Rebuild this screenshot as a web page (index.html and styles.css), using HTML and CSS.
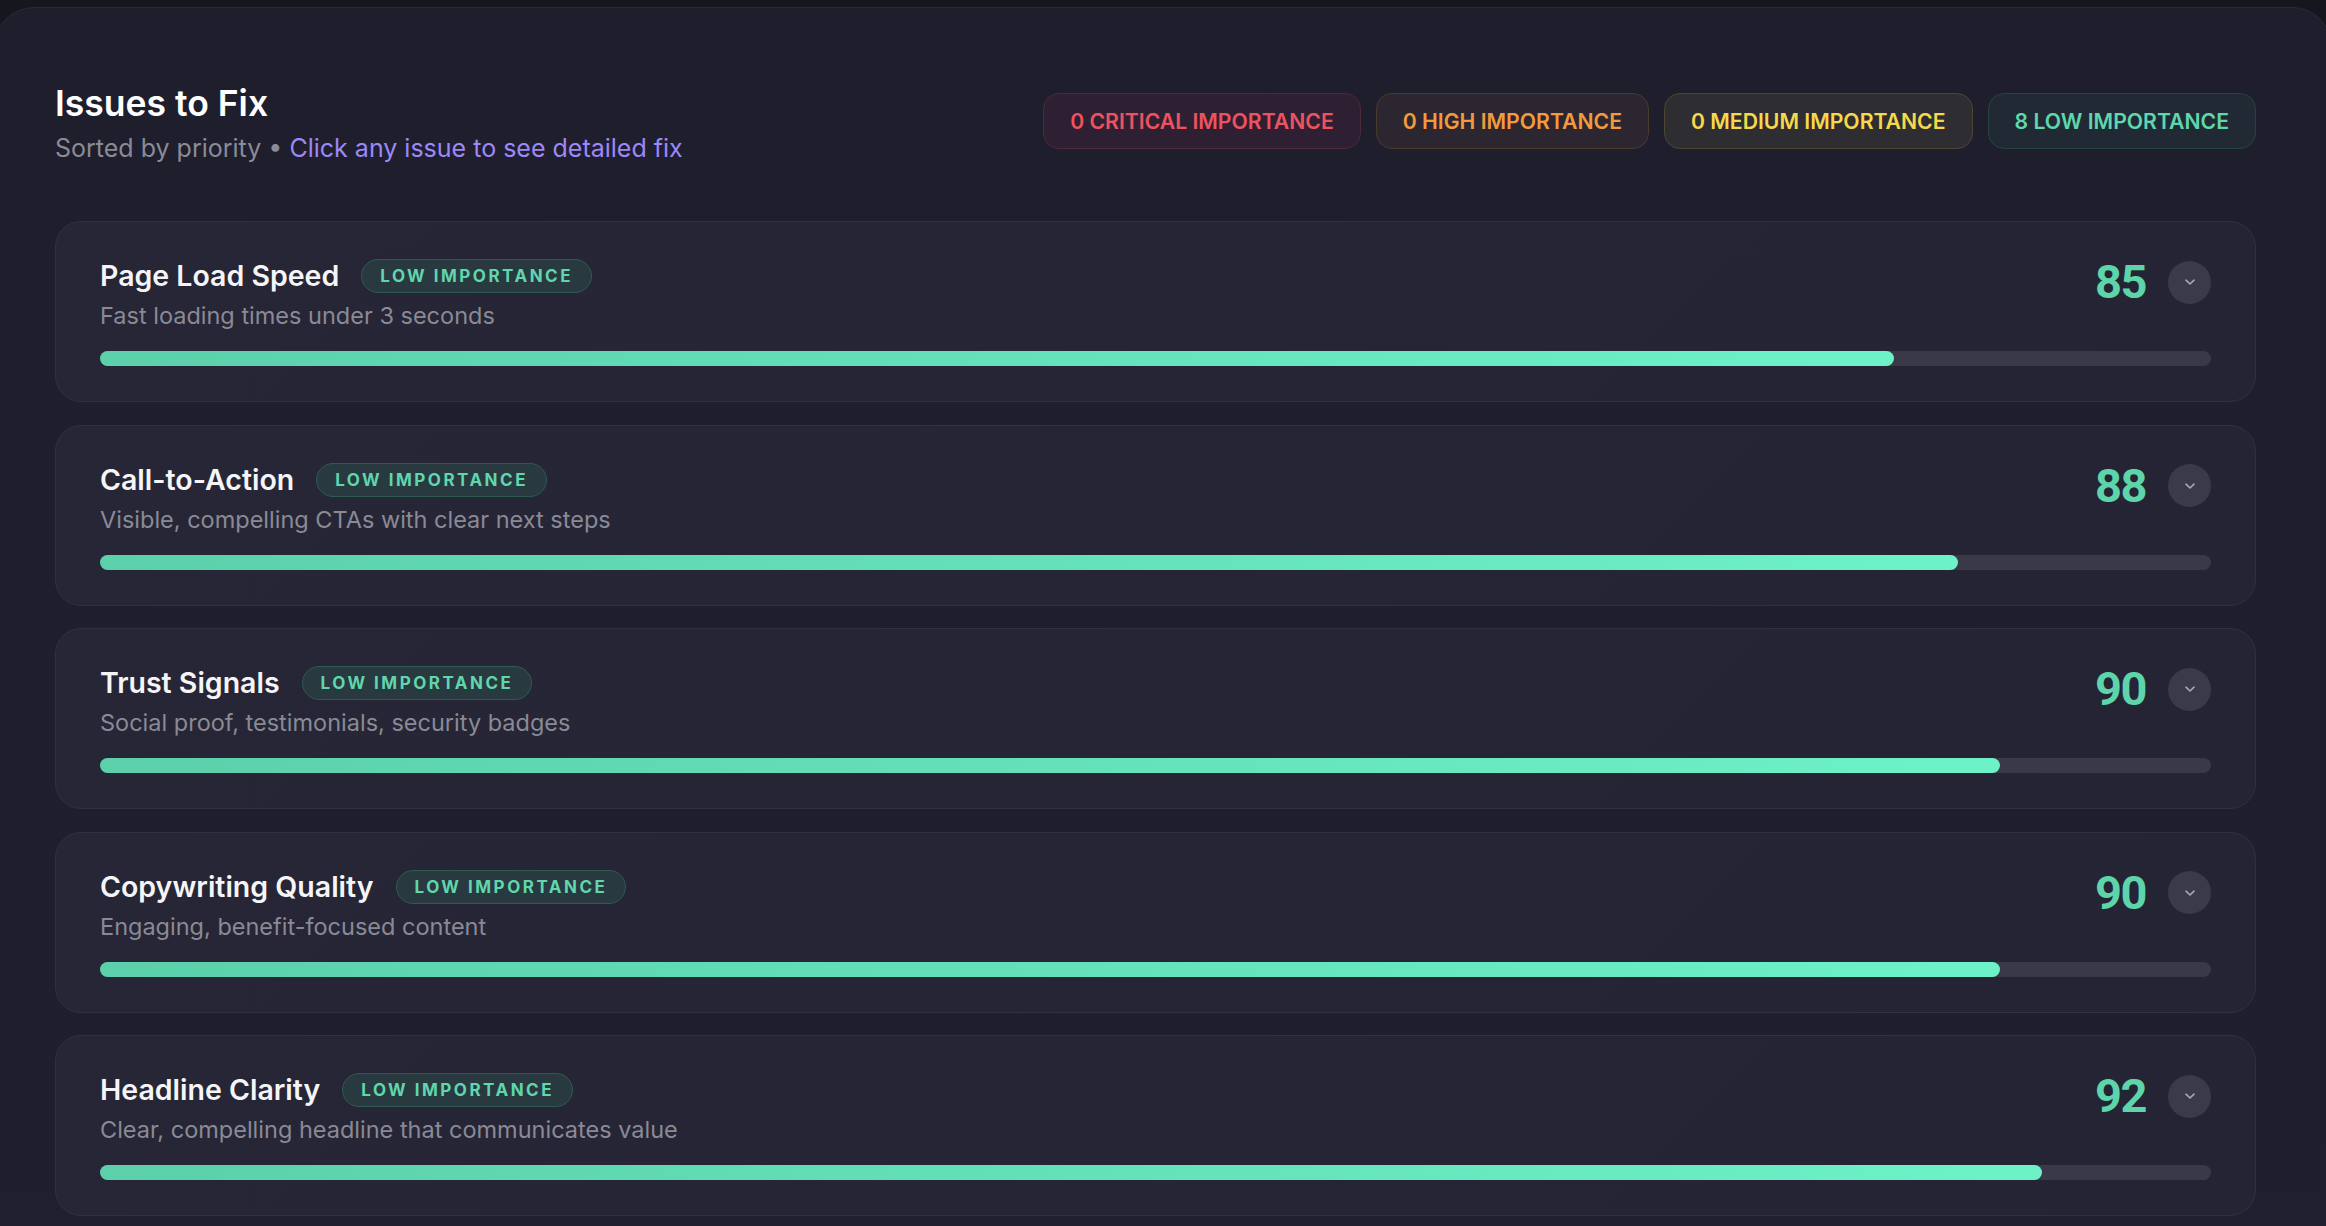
FILE: index.html
```html
<html>
  <head>
    <title>Issues to Fix</title>
    <link rel="stylesheet" href="styles.css">
  </head>
  <body>
    <div class="panel">
      <div class="panel-head">
        <div class="head-text">
          <h1>Issues to Fix</h1>
          <p class="subtitle">Sorted by priority &bull; <span class="hint">Click any issue to see detailed fix</span></p>
        </div>
        <div class="counts">
          <span class="count critical">0 CRITICAL IMPORTANCE</span>
          <span class="count high">0 HIGH IMPORTANCE</span>
          <span class="count medium">0 MEDIUM IMPORTANCE</span>
          <span class="count low">8 LOW IMPORTANCE</span>
        </div>
      </div>

      <div class="issue-list">
        <div class="issue">
          <div class="issue-top">
            <div class="issue-info">
              <div class="issue-title">
                <h3>Page Load Speed</h3>
                <span class="tag">LOW IMPORTANCE</span>
              </div>
              <p class="issue-desc">Fast loading times under 3 seconds</p>
            </div>
            <div class="issue-score">
              <span class="score">85</span>
              <span class="toggle"><svg width="16" height="16" viewBox="0 0 16 16"><path d="M4 6.2l4 3.8 4-3.8" fill="none" stroke="#a9a9b8" stroke-width="1.6" stroke-linecap="round" stroke-linejoin="round"/></svg></span>
            </div>
          </div>
          <div class="bar"><div class="bar-fill" style="width: 85%"></div></div>
        </div>

        <div class="issue">
          <div class="issue-top">
            <div class="issue-info">
              <div class="issue-title">
                <h3>Call-to-Action</h3>
                <span class="tag">LOW IMPORTANCE</span>
              </div>
              <p class="issue-desc">Visible, compelling CTAs with clear next steps</p>
            </div>
            <div class="issue-score">
              <span class="score">88</span>
              <span class="toggle"><svg width="16" height="16" viewBox="0 0 16 16"><path d="M4 6.2l4 3.8 4-3.8" fill="none" stroke="#a9a9b8" stroke-width="1.6" stroke-linecap="round" stroke-linejoin="round"/></svg></span>
            </div>
          </div>
          <div class="bar"><div class="bar-fill" style="width: 88%"></div></div>
        </div>

        <div class="issue">
          <div class="issue-top">
            <div class="issue-info">
              <div class="issue-title">
                <h3>Trust Signals</h3>
                <span class="tag">LOW IMPORTANCE</span>
              </div>
              <p class="issue-desc">Social proof, testimonials, security badges</p>
            </div>
            <div class="issue-score">
              <span class="score">90</span>
              <span class="toggle"><svg width="16" height="16" viewBox="0 0 16 16"><path d="M4 6.2l4 3.8 4-3.8" fill="none" stroke="#a9a9b8" stroke-width="1.6" stroke-linecap="round" stroke-linejoin="round"/></svg></span>
            </div>
          </div>
          <div class="bar"><div class="bar-fill" style="width: 90%"></div></div>
        </div>

        <div class="issue">
          <div class="issue-top">
            <div class="issue-info">
              <div class="issue-title">
                <h3>Copywriting Quality</h3>
                <span class="tag">LOW IMPORTANCE</span>
              </div>
              <p class="issue-desc">Engaging, benefit-focused content</p>
            </div>
            <div class="issue-score">
              <span class="score">90</span>
              <span class="toggle"><svg width="16" height="16" viewBox="0 0 16 16"><path d="M4 6.2l4 3.8 4-3.8" fill="none" stroke="#a9a9b8" stroke-width="1.6" stroke-linecap="round" stroke-linejoin="round"/></svg></span>
            </div>
          </div>
          <div class="bar"><div class="bar-fill" style="width: 90%"></div></div>
        </div>

        <div class="issue">
          <div class="issue-top">
            <div class="issue-info">
              <div class="issue-title">
                <h3>Headline Clarity</h3>
                <span class="tag">LOW IMPORTANCE</span>
              </div>
              <p class="issue-desc">Clear, compelling headline that communicates value</p>
            </div>
            <div class="issue-score">
              <span class="score">92</span>
              <span class="toggle"><svg width="16" height="16" viewBox="0 0 16 16"><path d="M4 6.2l4 3.8 4-3.8" fill="none" stroke="#a9a9b8" stroke-width="1.6" stroke-linecap="round" stroke-linejoin="round"/></svg></span>
            </div>
          </div>
          <div class="bar"><div class="bar-fill" style="width: 92%"></div></div>
        </div>
      </div>
    </div>
  </body>
</html>
```

FILE: styles.css
```css
* {
  margin: 0;
  padding: 0;
  box-sizing: border-box;
  font-family: Inter, "Noto Sans", sans-serif;
}

html, body {
  overflow: hidden;
}

body {
  background: #16161f;
  color: white;
}

.panel {
  margin: 7px -6px 0 -6px;
  padding: 75px 75px 60px 60px;
  border: 1px solid #2a2a3a;
  border-radius: 40px;
  background: linear-gradient(180deg, #1e1e2d 0%, #1f1f2e 100%);
}

.panel-head {
  display: flex;
  justify-content: space-between;
  align-items: flex-start;
}

h1 {
  font-size: 35.5px;
  line-height: 41px;
  font-weight: 600;
  color: #ffffff;
}

.subtitle {
  margin-top: 10px;
  font-size: 25px;
  line-height: 29px;
  color: #8b8b97;
}

.hint {
  color: #9d88f7;
}

.counts {
  display: flex;
  gap: 15px;
  margin-top: 10px;
}

.count {
  display: flex;
  align-items: center;
  height: 56px;
  padding: 0 26px;
  border-radius: 16px;
  border: 1px solid;
  font-size: 21.2px;
  font-weight: 600;
}

.critical {
  color: #ef525f;
  background: #2e2032;
  border-color: #4b2a3a;
}

.high {
  color: #f39a3c;
  background: #2c2630;
  border-color: #4a3a2c;
}

.medium {
  color: #f7d84b;
  background: #2e2d31;
  border-color: #4c4632;
}

.low {
  color: #5fd6ac;
  background: #212a34;
  border-color: #264340;
}

.issue-list {
  display: flex;
  flex-direction: column;
  gap: 22.5px;
  margin-top: 58px;
}

.issue {
  padding: 37px 44px 35px 44px;
  border: 1px solid #30303f;
  border-radius: 26px;
  background: linear-gradient(135deg, #262636 0%, #242434 100%);
  cursor: pointer;
}

.issue-top {
  display: flex;
  justify-content: space-between;
  align-items: flex-start;
}

.issue-title {
  display: flex;
  align-items: center;
  gap: 22px;
}

.issue-title h3 {
  font-size: 28.5px;
  line-height: 34px;
  font-weight: 600;
  color: #f5f5f7;
}

.tag {
  display: flex;
  align-items: center;
  height: 34px;
  padding: 0 18px;
  border-radius: 17px;
  border: 1px solid #2f5a51;
  background: #293940;
  color: #5fd6ac;
  font-size: 17px;
  font-weight: 700;
  letter-spacing: 2.5px;
}

.issue-desc {
  margin-top: 8px;
  font-size: 23.5px;
  line-height: 29px;
  color: #8a8a96;
}

.issue-score {
  display: flex;
  align-items: center;
  gap: 22px;
}

.score {
  font-family: Roboto, Inter, sans-serif;
  font-size: 47px;
  line-height: 46px;
  font-weight: 700;
  letter-spacing: -1.5px;
  color: #5dd4a9;
}

.toggle {
  display: flex;
  align-items: center;
  justify-content: center;
  width: 43px;
  height: 43px;
  border-radius: 50%;
  background: #3a3a48;
}

.bar {
  margin-top: 21px;
  height: 15px;
  border-radius: 8px;
  background: #393947;
}

.bar-fill {
  height: 100%;
  border-radius: 8px;
  background: linear-gradient(90deg, #5bd0aa 0%, #6df2c8 100%);
}
```
